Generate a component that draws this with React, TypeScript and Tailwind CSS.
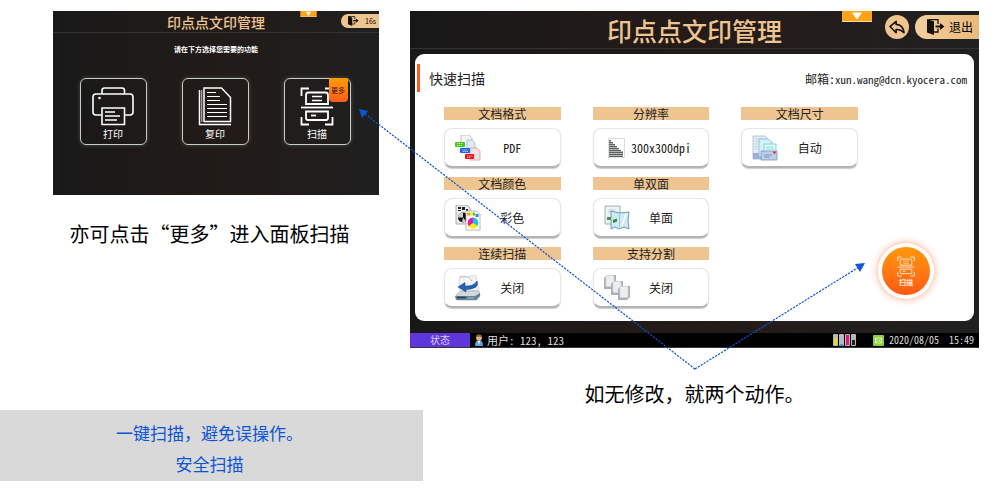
import type { ReactNode } from 'react';

const GOLD = '#eec591';

const PrintIcon = () => (
  <svg viewBox="0 0 42 39" className="w-[42px] h-[39px]" fill="none" stroke="#fff" strokeWidth="1.6">
    <path d="M10 7V3.500Q10 1 12.500 1H30q2.500 0 2.500 2.500V7" />
    <path d="M9.500 28H4q-3 0-3-3V10q0-3 3-3h34q3 0 3 3v15q0 3-3 3h-5" />
    <path d="M10 21h22.500v16.500H10z" />
    <path d="M13 25h10M13 29h15M13 33h12" strokeWidth="1.400" />
    <circle cx="7.500" cy="11" r="1.300" fill="#fff" stroke="none" />
  </svg>
);

const CopyIcon = () => (
  <svg viewBox="0 0 34 39" className="w-[34px] h-[39px]" fill="none" stroke="#fff" strokeWidth="1.5">
    <path d="M6 1h17.500l9 9.500v24H6z" />
    <path d="M1.500 3v34.500H33" />
    <path d="M3.800 3v32" strokeWidth=".8" />
    <path d="M9 5.500h9M9 9.500h13M9 13.500h13M9 17.500h20M9 21.500h20M9 25.500h20M9 29.500h20" strokeWidth="1.200" />
  </svg>
);

const ScanIcon = ({ className }: { className: string }) => (
  <svg viewBox="0 0 34 39" className={className} fill="none" stroke="currentColor" strokeWidth="1.8">
    <path d="M1.500 9V1.500H9M25 1.500h7.500V9M1.500 30v7.500H9M25 37.500h7.500V30" />
    <path d="M6 17V8q0-2.500 2.500-2.500h17Q28 5.500 28 8v9z" />
    <path d="M12 9.500h10M12 13.500h10" strokeWidth="1.300" />
    <path d="M1 20.500h32" />
    <path d="M6 24.500h22V31q0 2-2 2H8q-2 0-2-2z" />
    <path d="M11 28.500h5" />
  </svg>
);

const DoorIcon = ({ className }: { className: string }) => (
  <svg viewBox="0 0 18 16" className={className} fill="#15100c">
    <path d="M0 0l7 2.500V16l-7-2.500z" />
    <path d="M1.500.6H11V5M11 9.500V13H7" fill="none" stroke="#15100c" strokeWidth="1.300" />
    <path d="M8.500 6.400h4.500V4l4.500 3.500-4.500 3.500V8.600H8.500z" />
  </svg>
);

const FormatIcon = () => (
  <svg viewBox="0 0 26 26" className="w-[26px] h-[26px]">
    <path d="M6 0h8l3 3v13H6z" fill="#f3f7f3" stroke="#a9c3ad" strokeWidth=".8" />
    <path d="M12 5h5l3 3v13h-8z" fill="#dfeaf5" stroke="#9db9d4" strokeWidth=".8" />
    <path d="M17 13h5l3 3v9H15V13z" fill="#f8e0e3" stroke="#d09aa2" strokeWidth=".8" />
    <rect x="0" y="7" width="10" height="5" rx="1" fill="#47c91c" />
    <rect x="5" y="13" width="10" height="5" rx="1" fill="#1a66e6" />
    <rect x="10" y="19" width="9" height="5" rx="1" fill="#ee1010" />
    <path d="M2 8.500h6M2 10.500h5M7 15h6M8 16.500h5M12 21h5.500M12 22.500h4" fill="none" stroke="#fff" strokeWidth=".7" strokeDasharray="1.400 .6" />
  </svg>
);

const dotColumns = [17, 15, 13, 11, 9, 7, 6];

const ResolutionIcon = () => (
  <svg viewBox="0 0 26 26" className="w-[26px] h-[26px]">
    <rect x="4.500" y="3.500" width="16" height="19" fill="#fff" stroke="#ddd" />
    {dotColumns.map((h, i) => (
      <path key={i} d={`M${6 + i * 2} 22V${22 - h}`} stroke="#454c48" strokeWidth="1.700" strokeDasharray="1.600 .4" />
    ))}
  </svg>
);

const SizeIcon = () => (
  <svg viewBox="0 0 26 26" className="w-[26px] h-[26px]">
    <path d="M1 1h12l3 3v20H1z" fill="#e3edf5" stroke="#a7bccd" strokeWidth=".8" />
    <path d="M3 4h9M3 6.500h11M3 9h3M3 11.500h3M3 14h3" stroke="#b7cbdc" strokeWidth=".8" />
    <path d="M1 18h9v6H1z" fill="#9dacd8" />
    <path d="M7 4h9l4 3v15H7z" fill="#d8f0fa" stroke="#83bdd8" strokeWidth=".8" />
    <path d="M12 9h12v12H12z" fill="#dff8f8" stroke="#6cc8ce" strokeWidth=".8" />
    <path d="M14 12h8M14 14h8" stroke="#8bd4d8" strokeWidth=".8" />
    <path d="M9 16h16v9H9z" fill="#bccfea" stroke="#7b94bf" strokeWidth=".8" />
    <path d="M12 20h8M12 22h6" stroke="#6f88b0" strokeWidth=".8" />
    <circle cx="22.500" cy="17.500" r="1.300" fill="#e8281f" />
  </svg>
);

const ColorIcon = () => (
  <svg viewBox="0 0 26 26" className="w-[26px] h-[26px]">
    <path d="M1 0h11l3 3v16H1z" fill="#ececec" stroke="#999" strokeWidth=".8" />
    <path d="M3 2h3v2H3zM7 2h3v3H7zM3 5h3v1H3zM11 4h2v2h-2z" fill="#222" />
    <circle cx="8" cy="12.500" r="5" fill="#111" />
    <path d="M8 12.500V7.500a5 5 0 0 0-5 5zM8 12.500l3 4a5 5 0 0 1-4 1z" fill="#ccc" />
    <path d="M11 6h10l4 3v16H11z" fill="#fff" stroke="#aaa" strokeWidth=".8" />
    <path d="M12 7.500h3v3h-3z" fill="#ff9b1a" />
    <path d="M15 7.500h3v3h-3z" fill="#f3e51b" />
    <path d="M18 7.500h2v3h-2z" fill="#38c744" />
    <path d="M20.500 9h3v3h-3z" fill="#2b83f0" />
    <circle cx="18" cy="18" r="5.500" fill="#ffee00" />
    <path d="M18 18v-5.500a5.500 5.500 0 0 0-4.500 8.500z" fill="#ee10b8" />
    <path d="M18 18v-5.500a5.500 5.500 0 0 1 4.500 8.500z" fill="#12c8ee" />
  </svg>
);

const DuplexIcon = () => (
  <svg viewBox="0 0 26 26" className="w-[26px] h-[26px]">
    <path d="M1 1h15v18H1z" fill="#edf3f3" stroke="#8fa9ad" strokeWidth=".9" />
    <path d="M4 4h7v4H4z" fill="#d4e5e6" />
    <path d="M3 12h5v3H3z" fill="#479a3a" />
    <path d="M7 6l8 2 10-1-1 9 1 8-5-2-5 2-4-2-4 2z" fill="#cfe9f5" stroke="#5a94ad" strokeWidth=".9" />
    <path d="M15.500 9v13" stroke="#8dbccf" strokeWidth=".8" />
    <path d="M9 15l4-1.500v3L9 18z" fill="#2f8e2c" />
    <path d="M22 9l-4 12" stroke="#fff" strokeWidth="1.600" />
  </svg>
);

const ContinuousIcon = () => (
  <svg viewBox="0 0 26 26" className="w-[26px] h-[26px]">
    <path d="M4 3l17-3 3 15-19 2z" fill="#eff1f2" stroke="#d3d8db" strokeWidth=".8" />
    <path d="M6 13l7-10 6 11" fill="none" stroke="#fff" strokeWidth="1.500" />
    <path d="M1 20l5-4h18l1 5-3 4H2z" fill="#d3d8dc" stroke="#a0a9b0" strokeWidth=".7" />
    <path d="M0 21h20l5-3v3l-4 4H1z" fill="#6e808c" />
    <path d="M2 22.500h9" stroke="#203e60" strokeWidth="1.500" />
    <path d="M13 23h6" stroke="#70c2ea" strokeWidth="1.200" />
    <path d="M22 6q3 8-11 8.500V17L3 12l7-4.500v3.500q9 .5 12-5z" fill="#2662b3" stroke="#173d79" strokeWidth=".5" />
    <path d="M4 2q8-3 13 4" fill="none" stroke="#aeb8bf" strokeWidth=".8" />
  </svg>
);

const SplitIcon = () => (
  <svg viewBox="0 0 26 26" className="w-[26px] h-[26px]" strokeWidth=".7">
    {[[0, 0, 12, 14], [7, 6, 12, 14], [14, 11, 12, 14]].map(([x, y, w, h]) => (
      <g key={x}>
        <path d={`M${x + 3} ${y}h${w - 3}v${h - 3}l-3 3h-${w - 3}v-${h - 3}z`} fill="#a9b0b6" />
        <rect x={x + 2} y={y + 0.5} width={w - 4} height={h - 3} rx="1" fill="#eceeef" stroke="#d3d7da" />
      </g>
    ))}
  </svg>
);

const UserIcon = () => (
  <svg viewBox="0 0 10 12" className="w-[10px] h-3">
    <path d="M1 12q0-6 4-6t4 6z" fill="#5ca3df" />
    <circle cx="5" cy="3.800" r="3" fill="#e9b27c" />
    <path d="M1.800 3.500Q2 .3 5 .3t3.200 3.200Q5 1.600 1.800 3.500z" fill="#8a5a2c" />
    <path d="M4 7h2l-1 4z" fill="#fff" />
  </svg>
);

const inks = ['#e6dc1e', '#25a5dc', '#e2187d', '#222222'];

const InkIcon = () => (
  <svg viewBox="0 0 24 12" className="w-6 h-3">
    {inks.map((ink, i) => (
      <g key={ink}>
        <rect x={i * 6} y="0" width="5" height="12" rx="1" fill="#b9b9bd" />
        <rect x={i * 6 + 1} y={[4, 10, 1, 6][i]} width="3" height={[7, 2, 10, 5][i]} fill={ink} />
      </g>
    ))}
  </svg>
);

const settings: { title: string; value: string; icon: ReactNode }[] = [
  { title: '文档格式', value: 'PDF', icon: <FormatIcon /> },
  { title: '分辨率', value: '300x300dpi', icon: <ResolutionIcon /> },
  { title: '文档尺寸', value: '自动', icon: <SizeIcon /> },
  { title: '文档颜色', value: '彩色', icon: <ColorIcon /> },
  { title: '单双面', value: '单面', icon: <DuplexIcon /> },
  { title: '', value: '', icon: null },
  { title: '连续扫描', value: '关闭', icon: <ContinuousIcon /> },
  { title: '支持分割', value: '关闭', icon: <SplitIcon /> },
];

const actions = [
  { label: '打印', icon: <PrintIcon /> },
  { label: '复印', icon: <CopyIcon /> },
  { label: '扫描', icon: <ScanIcon className="w-[34px] h-[39px]" />, more: true },
];

const PullTab = ({ className }: { className: string }) => (
  <svg viewBox="0 0 30 11" className={className}>
    <rect width="30" height="11" fill="#ffa31a" />
    <path d="M0 10.500h30" stroke="#fbd9a0" />
    <path d="M10 1.500h10l-5 7z" fill="#fff" />
  </svg>
);

function HomePanel() {
  return (
    <section className="ml-[53px] mr-[44px] h-[184px] bg-linear-to-r from-[#191919] via-[#211b18] to-[#1f1f1f] text-white">
      <header className="relative flex h-[22px] items-center justify-center border-b border-[#333]">
        <h1 className="text-sm leading-5 font-medium text-[#eec591]">印点点文印管理</h1>
        <PullTab className="absolute right-[62px] top-0 w-[17px] h-[6px]" />
        <button className="absolute right-0 top-[3px] flex h-[14px] w-[38px] items-center gap-[6px] rounded-l-full bg-[#eec591] pl-[7px] text-[7px] text-black">
          <DoorIcon className="w-[11px] h-[10px]" />
          16s
        </button>
      </header>
      <p className="mt-[11px] text-center text-[7px] leading-[10px] font-bold">请在下方选择您需要的功能</p>
      <div className="mt-[24px] flex justify-center gap-[35px] pr-[2px]">
        {actions.map((action) => (
          <button
            key={action.label}
            className="relative flex h-[67px] w-[67px] flex-col items-center rounded-md border border-[#c9ccc6] pt-[8px] shadow-[0_0_4px_#4a5040]"
          >
            {action.icon}
            <span className="text-[10px] leading-4">{action.label}</span>
            {action.more && (
              <span className="absolute right-[2px] top-[-1px] h-6 w-[19px] rounded-b-sm bg-linear-to-b from-[#ff9a0c] to-[#ff5a14] text-[7px] leading-6 text-[#3a1500]">
                更多
              </span>
            )}
          </button>
        ))}
      </div>
    </section>
  );
}

function ScanPanel() {
  return (
    <section className="mr-[25px] bg-linear-to-r from-[#181818] via-[#241b18] to-[#202020]">
      <header className="relative flex h-[38px] items-center justify-center border-b border-[#343434]">
        <h1 className="text-[25px] leading-9 font-medium text-[#eec591]">印点点文印管理</h1>
        <PullTab className="absolute right-[107px] top-0 w-[30px] h-[11px]" />
        <div className="absolute right-0 top-1 flex items-center gap-[6px]">
          <button aria-label="返回" className="flex h-6 w-6 items-center justify-center rounded-full bg-[#eec591]">
            <svg viewBox="0 0 18 16" className="w-4 h-[14px]" fill="none" stroke="#15100c" strokeWidth="1.800" strokeLinejoin="round">
              <path d="M1 7.500L8 1.500v3.500q8 .5 9 9.500-4-4-9-3.500v3.500z" />
            </svg>
          </button>
          <button className="flex h-6 w-16 items-center gap-[4px] rounded-l-full bg-linear-to-r from-[#f2cf9f] to-[#eab97c] pl-3 text-xs text-black">
            <DoorIcon className="w-[18px] h-4" />
            退出
          </button>
        </div>
      </header>

      <div className="mx-[5px] mt-[5px] rounded-[9px] bg-white pt-[10px] pb-[13px] text-[#222]">
        <div className="flex h-[30px] items-start justify-between pl-[2px] pr-[7px]">
          <h2 className="flex items-center text-sm leading-6">
            <span className="mr-[9px] h-7 w-[3px] bg-[#ff5a1c]"></span>
            快速扫描
          </h2>
          <p className="mt-[5px] font-['Noto_Sans_Mono_CJK_SC','Liberation_Mono',monospace] text-[11px] leading-5">
            <span className="text-xs">邮箱:</span>xun.wang@dcn.kyocera.com
          </p>
        </div>
        <div className="mt-[13px] flex">
          <div className="ml-[29px] grid flex-1 grid-cols-3 gap-x-8 gap-y-[9px]">
            {settings.map((item, i) =>
              item.icon ? (
                <div key={i}>
                  <div id={`setting-${i}`} className="h-[13px] text-center text-xs leading-[13px]" style={{ backgroundColor: GOLD }}>
                    {item.title}
                  </div>
                  <button
                    aria-labelledby={`setting-${i} value-${i}`}
                    className="mt-2 flex h-10 w-full items-center rounded-lg border border-[#e6e6e6] border-b-2 border-b-[#b4b4b4] bg-white pl-[10px] pr-4 shadow-[0_1px_1px_#ccc]"
                  >
                    {item.icon}
                    <span
                      id={`value-${i}`}
                      className="flex-1 text-center font-['Noto_Sans_Mono_CJK_SC','Liberation_Mono',monospace] text-xs whitespace-nowrap"
                    >
                      {item.value}
                    </span>
                  </button>
                </div>
              ) : (
                <div key={i}></div>
              ),
            )}
          </div>
          <div className="flex w-[116px] items-end justify-center pr-[20px] pb-[13px]">
            <button className="flex h-12 w-12 flex-col items-center justify-center rounded-full bg-linear-to-b from-[#ff980c] to-[#ff5714] text-[#ffe9d8] shadow-[0_0_0_4px_#fff,0_0_2px_5px_#fbd2b8,0_0_5px_8px_#fde4de]">
              <ScanIcon className="w-[18px] h-[21px]" />
              <span className="text-[7px] leading-[10px] font-bold">扫描</span>
            </button>
          </div>
        </div>
      </div>

      <footer className="mt-3 flex h-[15px] items-center border-b border-[#333] bg-black font-['Noto_Sans_Mono_CJK_SC','Liberation_Mono',monospace] text-[10px] leading-[14px] text-[#ddd]">
        <span className="w-[60px] bg-[#5f35dc] text-center text-[#d9ccff]">状态</span>
        <span className="ml-1 flex flex-1 items-center gap-[3px] text-[11px] whitespace-pre">
          <UserIcon />
          用户: 123, 123
        </span>
        <InkIcon />
        <svg viewBox="0 0 11 11" className="ml-4 w-[11px] h-[11px]">
          <rect width="11" height="11" rx="1" fill="#8ccf3c" />
          <path d="M2.500 3h6v5h-6zM2.500 3l3 3 3-3M2.500 8l2-2M8.500 8l-2-2" fill="none" stroke="#e5f8ce" strokeWidth=".8" />
        </svg>
        <time className="ml-[5px]">2020/08/05</time>
        <time className="ml-[10px] mr-[5px]">15:49</time>
      </footer>
    </section>
  );
}

export default function App() {
  return (
    <main className="relative grid grid-cols-[423fr_581fr] bg-white pt-[11px] pb-[15px] font-['Noto_Sans_CJK_SC',sans-serif]" lang="zh-CN">
      <div className="flex flex-col">
        <HomePanel />
        <p className="mt-[23px] pr-[4px] text-center text-xl leading-8 text-black">亦可点击“更多”进入面板扫描</p>
        <div className="mt-auto bg-[#d9d9d9] pt-[7px] pb-[2px] pr-[4px] text-center text-[17px] leading-[31px] text-[#0b54d8]">
          <p>一键扫描，避免误操作。</p>
          <p>安全扫描</p>
        </div>
      </div>
      <div className="ml-[-13px] flex min-h-[470px] flex-col">
        <ScanPanel />
        <p className="mt-[30px] mr-[25px] text-center text-xl leading-8 text-black">如无修改，就两个动作。</p>
      </div>

      {/* callout arrows drawn over both panels */}
      <svg
        viewBox="0 0 1004 496"
        preserveAspectRatio="none"
        className="pointer-events-none absolute inset-0 h-full w-full"
        aria-hidden="true"
      >
        <path d="M695 369L364 113M695 369L859 267" fill="none" stroke="#0b55d9" strokeWidth="1.200" strokeDasharray="2.200 1.200" />
        <path d="M359 109l9 2-6 7zM865 263l-10 1 5 8z" fill="#0b55d9" />
      </svg>
    </main>
  );
}
